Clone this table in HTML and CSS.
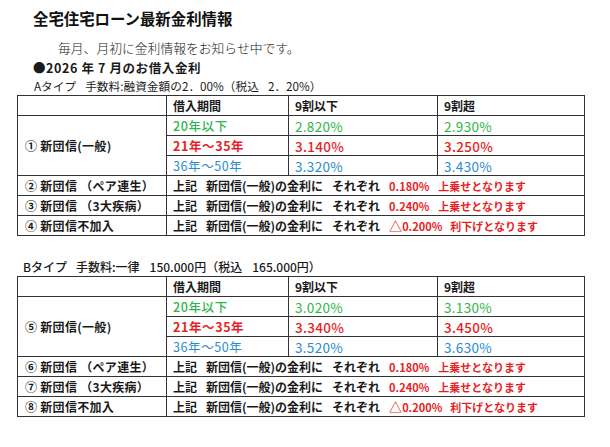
FILE: index.html
```html
<!DOCTYPE html>
<html lang="ja">
<head>
<meta charset="utf-8">
<title>全宅住宅ローン最新金利情報</title>
<link rel="stylesheet" href="styles.css">
</head>
<body>
<div class="page">
  <h1 class="title">全宅住宅ローン最新金利情報</h1>
  <p class="lead">毎月、月初に金利情報をお知らせ中です。</p>
  <p class="month">●2026 年 7 月のお借入金利</p>

  <p class="type type-a">Aタイプ<span class="sp"></span>手数料:融資金額の2．00%（税込<span class="sp"></span>2．20%）</p>
  <table class="rates">
    <colgroup><col class="c1"><col class="c2"><col class="c3"><col class="c4"></colgroup>
    <tr class="head"><td></td><td>借入期間</td><td>9割以下</td><td>9割超</td></tr>
    <tr><td rowspan="3" class="name">① 新団信(一般)</td><td class="term green">20年以下</td><td class="num green">2.820%</td><td class="num green">2.930%</td></tr>
    <tr><td class="term red">21年～35年</td><td class="num red">3.140%</td><td class="num red">3.250%</td></tr>
    <tr><td class="term blue">36年～50年</td><td class="num blue">3.320%</td><td class="num blue">3.430%</td></tr>
    <tr><td class="name">② 新団信 （ペア連生）</td><td colspan="3" class="note">上記<span class="g"></span>新団信(一般)の金利に<span class="g"></span>それぞれ<span class="g"></span><span class="red">0.180%<span class="g"></span>上乗せとなります</span></td></tr>
    <tr><td class="name">③ 新団信 （3大疾病）</td><td colspan="3" class="note">上記<span class="g"></span>新団信(一般)の金利に<span class="g"></span>それぞれ<span class="g"></span><span class="red">0.240%<span class="g"></span>上乗せとなります</span></td></tr>
    <tr><td class="name">④ 新団信不加入</td><td colspan="3" class="note">上記<span class="g"></span>新団信(一般)の金利に<span class="g"></span>それぞれ<span class="g"></span><span class="red"><span class="tri">△</span>0.200%<span class="g2"></span>利下げとなります</span></td></tr>
  </table>

  <p class="type type-b">Bタイプ<span class="sp"></span>手数料:一律<span class="sp2"></span>150.000円（税込<span class="sp2"></span>165.000円）</p>
  <table class="rates">
    <colgroup><col class="c1"><col class="c2"><col class="c3"><col class="c4"></colgroup>
    <tr class="head"><td></td><td>借入期間</td><td>9割以下</td><td>9割超</td></tr>
    <tr><td rowspan="3" class="name">⑤ 新団信(一般)</td><td class="term green">20年以下</td><td class="num green">3.020%</td><td class="num green">3.130%</td></tr>
    <tr><td class="term red">21年～35年</td><td class="num red">3.340%</td><td class="num red">3.450%</td></tr>
    <tr><td class="term blue">36年～50年</td><td class="num blue">3.520%</td><td class="num blue">3.630%</td></tr>
    <tr><td class="name">⑥ 新団信 （ペア連生）</td><td colspan="3" class="note">上記<span class="g"></span>新団信(一般)の金利に<span class="g"></span>それぞれ<span class="g"></span><span class="red">0.180%<span class="g"></span>上乗せとなります</span></td></tr>
    <tr><td class="name">⑦ 新団信 （3大疾病）</td><td colspan="3" class="note">上記<span class="g"></span>新団信(一般)の金利に<span class="g"></span>それぞれ<span class="g"></span><span class="red">0.240%<span class="g"></span>上乗せとなります</span></td></tr>
    <tr><td class="name">⑧ 新団信不加入</td><td colspan="3" class="note">上記<span class="g"></span>新団信(一般)の金利に<span class="g"></span>それぞれ<span class="g"></span><span class="red"><span class="tri">△</span>0.200%<span class="g2"></span>利下げとなります</span></td></tr>
  </table>
</div>
</body>
</html>
```

FILE: styles.css
```css
html, body {
  margin: 0;
  padding: 0;
  background: #ffffff;
}

body {
  font-family: "Noto Sans CJK JP", "Noto Sans", sans-serif;
  color: #1a1a1a;
}

.page {
  width: 610px;
  height: 447px;
  padding: 9px 0 0 0;
  box-sizing: border-box;
}

.title {
  margin: 0 0 0 33px;
  font-size: 15.4px;
  line-height: 18px;
  font-weight: 700;
  color: #111;
}

.lead {
  margin: 13px 0 0 58px;
  font-size: 12.8px;
  line-height: 16px;
  font-weight: 300;
  color: #222;
}

.month {
  margin: 4px 0 0 33px;
  font-size: 12.5px;
  line-height: 15px;
  font-weight: 700;
  letter-spacing: 0.6px;
}

.type {
  margin: 3px 0 0 34px;
  font-size: 11.7px;
  line-height: 15px;
  font-weight: 400;
}

.type-b {
  margin: 23px 0 0 23px;
  font-size: 12px;
  font-weight: 500;
}

.sp {
  display: inline-block;
  width: 9px;
}

.sp2 {
  display: inline-block;
  width: 10px;
}

.rates {
  margin: 2px 0 0 17px;
  width: 567px;
  border-collapse: collapse;
  table-layout: fixed;
  font-size: 12px;
  font-weight: 700;
}

.c1 { width: 149px; }
.c2 { width: 122px; }
.c3 { width: 149px; }
.c4 { width: 147px; }

.rates td {
  border: 1px solid #333;
  height: 19px;
  padding: 0 0 0 6px;
  line-height: 18px;
  white-space: nowrap;
  vertical-align: middle;
}

.rates .name {
  padding-left: 7px;
  letter-spacing: 0.3px;
}

.rates .term {
  font-size: 12.5px;
  letter-spacing: 0.6px;
}

.rates .term.green { font-weight: 500; }
.rates .term.blue { font-weight: 400; }

.rates .num {
  font-weight: 400;
  font-size: 13.5px;
  letter-spacing: 0.3px;
}

.rates .num.red { font-weight: 500; }

.note .g {
  display: inline-block;
  width: 9px;
}

.note .g2 {
  display: inline-block;
  width: 8px;
}

.note .red {
  font-size: 11px;
}

.note .tri {
  font-size: 13px;
  font-weight: 700;
}

.green { color: #2fb548; }
.red { color: #e81e25; }
.blue { color: #2a8bd3; }
```
